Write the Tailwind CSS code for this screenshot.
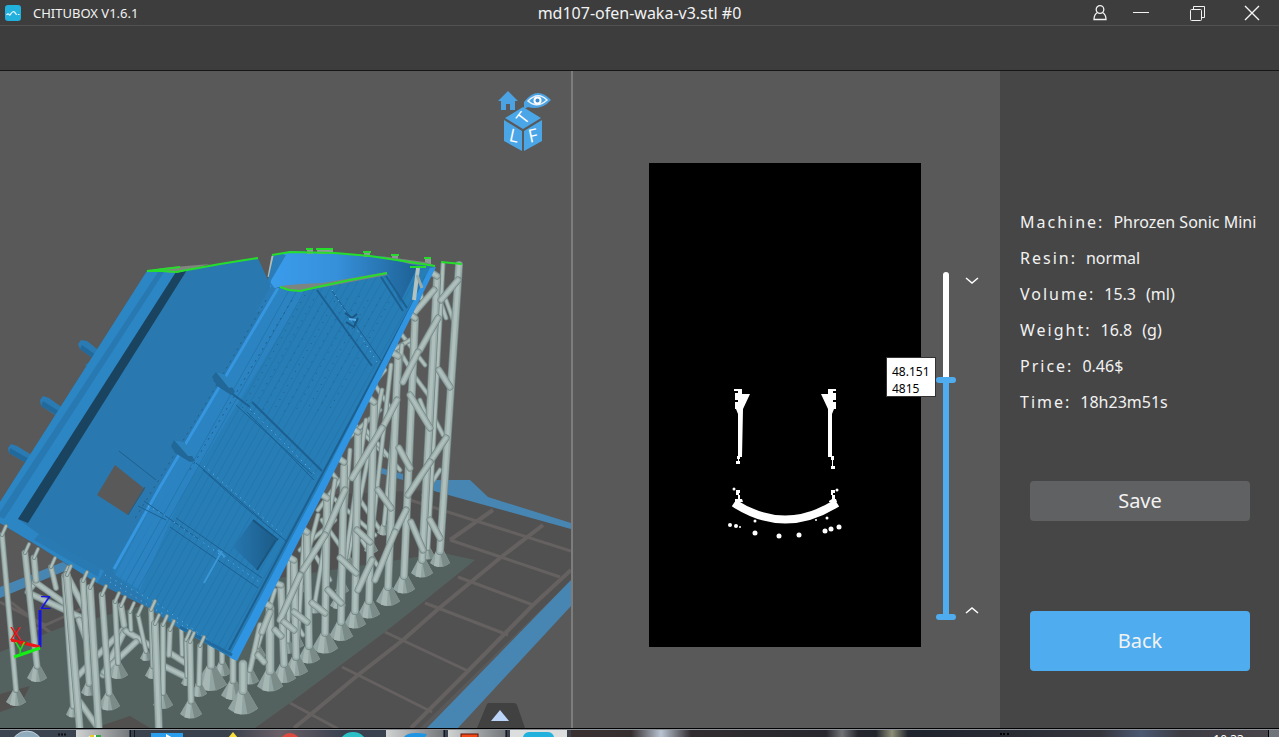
<!DOCTYPE html>
<html lang="en">
<head>
    <meta charset="UTF-8">
    <meta name="viewport" content="width=device-width, initial-scale=1.0">
    <title>CHITUBOX V1.6.1</title>
    <script src="https://cdn.jsdelivr.net/npm/@tailwindcss/browser@4"></script>
</head>
<body class="bg-[#595959] text-[#f2f2f2] font-['Noto_Sans','Open_Sans',sans-serif]">
<div class="flex flex-col h-screen overflow-hidden">

    <!-- Title bar -->
    <header class="grid grid-cols-3 items-center h-[26px] shrink-0 bg-[#3d3d3d] border-b border-[#525252]">
        <div class="flex items-center gap-3 pl-[5px]">
            <svg class="size-4" viewBox="0 0 16 16" fill="none">
                <rect width="16" height="16" rx="3" fill="#22b1dc"/>
                <path d="M1.500 10 Q3 8 4 9.500 Q5 11 6 8.500 Q8 5.500 10 7.500 Q11 10 12 9 M13 9.500h1.500" stroke="#e8f8ff" stroke-width="1.200"/>
            </svg>
            <span class="text-[13px] leading-5">CHITUBOX V1.6.1</span>
        </div>
        <h1 class="text-center text-base leading-6 whitespace-nowrap">md107-ofen-waka-v3.stl #0</h1>
        <div class="flex justify-end items-center">
            <button aria-label="Account" class="flex justify-center w-[26px]">
                <svg class="w-4 h-[18px]" viewBox="0 0 16 18" fill="none" stroke="#f2f2f2" stroke-width="1.300">
                    <circle cx="8" cy="5.500" r="3.800"/>
                    <path d="M5.500 8.500 Q2 10.500 2 15.500 H14 Q14 10.500 10.500 8.500"/>
                </svg>
            </button>
            <button aria-label="Minimize" class="flex justify-center w-14">
                <svg class="size-4" viewBox="0 0 16 16" stroke="#f2f2f2"><path d="M0 7.500H16"/></svg>
            </button>
            <button aria-label="Restore" class="flex justify-center w-14">
                <svg class="size-4" viewBox="0 0 16 16" fill="none" stroke="#f2f2f2">
                    <rect x="1.500" y="4.500" width="11" height="11" rx="1"/>
                    <path d="M4.500 4.500V1.500H15.500V12.500H12.500"/>
                </svg>
            </button>
            <button aria-label="Close" class="flex justify-center w-[54px]">
                <svg class="size-4" viewBox="0 0 16 16" stroke="#f5f5f5" stroke-width="1.400"><path d="M1 1L15 15M15 1L1 15"/></svg>
            </button>
        </div>
    </header>

    <!-- Toolbar -->
    <div class="h-[45px] shrink-0 bg-[#3d3d3d] border-b border-[#161616]"></div>

    <main class="flex flex-1 min-h-0">
        <!-- 3D view -->
        <section class="relative flex-1 min-w-0 border-r-2 border-[#7d7d7d]">
            <svg id="scene" class="block size-full" viewBox="0 71 571 657" preserveAspectRatio="xMinYMax slice" fill="none">
                <defs>
                    <linearGradient id="inner" x1="0" y1="0" x2="1" y2="0">
                        <stop offset="0" stop-color="#3a9cec"/><stop offset=".45" stop-color="#3690da"/><stop offset="1" stop-color="#1d6194"/>
                    </linearGradient>
                    <linearGradient id="door" x1="0" y1="0" x2="1" y2="0">
                        <stop offset="0" stop-color="#2677b0"/><stop offset="1" stop-color="#1c5b88"/>
                    </linearGradient>
                    <clipPath id="wallClip"><path d="M284 290L300 291L386 275L428 276L228 655L120 578Z"/></clipPath>
                </defs>

                <!-- build plate -->
                <path d="M435 490L571 529V580L420 728H0V594L66 568L200 500Z" fill="#525151"/>
                <g stroke="#656160" stroke-width="3">
                    <path d="M543 525L500 558L437 610L403 640L358 675L310 715L294 728" stroke-width="4"/>
                    <path d="M493 510L450 540M571 570L533 605L467 672L411 728" stroke-width="4"/>
                    <path d="M410 500L571 551M450 540L560 577M458 577L533 605M425 603L508 635M385 632L468 671M342 667L432 712M290 703L340 730"/>
                    <path d="M0 602L45 625M30 632L90 605M8 600L60 640"/>
                </g>
                <path d="M443 553L475 560L423 602L385 632L290 703L255 728H0V652L60 628L200 590Z" fill="#54625f"/>
                <path d="M0 694L30 686L20 705L0 712ZM95 728L130 716L150 728Z" fill="#524f4f"/>
                <path d="M432 480H470L488 497L571 523V529L434 491ZM571 580V606L458 728H427ZM0 587L63 562L72 568L0 598ZM378 467L403 474V480L376 472Z" fill="#4786b3"/>

                <g id="backSupports"></g>
                <g id="rightSupports"></g>

                <!-- pegs on the left wall -->
                <g fill="#2a7bb3">
                    <path d="M78 344L81 340L87 341L101 352L97 361L80 349ZM40 400L43 396L49 398L67 411L60 418L41 406ZM8 448L11 444L17 446L35 457L30 465L9 453ZM85 365L93 360L90 368Z"/>
                </g>
                <g fill="#236a9c">
                    <path d="M80 349L97 361L99 357L82 345ZM41 406L60 417L62 413L43 401ZM9 453L30 465L31 460L10 448Z"/>
                </g>

                <!-- model body -->
                <path d="M147 271L175 272L258 258L268 279L274 255L290 251L380 256L435 267L235 660L180 629L147 607L97 583L40 547L0 523V502Z" fill="#2979b0"/>
                <path d="M258 258L268 280L275 260L272 254Z" fill="#595959"/>
                <path d="M273 256L269 277" stroke="#b3bcb9" stroke-width="3"/>
                <path d="M147 271L176 272L18 519L40 535L104 571L97 583L40 547L0 523V502Z" fill="#2c86c4"/>
                <path d="M158 272L164 272L4 519L0 517V512Z" fill="#2879b1"/>
                <path d="M176 272L187 270L28 523L18 519Z" fill="#19435f"/>
                <path d="M40 533L100 569L98 577L34 540Z" fill="#297ab3"/>
                <path d="M115 465L145 489L128 515L97 495Z" fill="#595959"/>
                <path d="M119 451L156 480M145 487L128 515" stroke="#1d5f8d"/>
                <!-- right wall -->
                <path d="M277 288L290 290L330 284L386 274L432 268L234 659L180 629L115 575L112 568L160 487Z" fill="#277db6"/>
                <path d="M279 288L306 291L182 495L140 590L115 575L162 487Z" fill="#2b84c1"/>
                <g id="planks" clip-path="url(#wallClip)" stroke="#2576ac"></g>
                <path d="M284 254L290 251L380 257L418 266L400 303L388 274L330 284L300 288L278 287L270 290L271 276Z" fill="url(#inner)"/>
                <path d="M274 254L286 255L270 282L276 290L262 310L256 312L271 286L268 280Z" fill="#2a7db8"/>
                <path d="M278 288L160 487L114 569" stroke="#3796e0" stroke-width="3"/>
                <path d="M280 286L300 284L322 283L387 272V275L325 287L299 291L285 290Z" fill="#7c8580"/>
                <path d="M147 271L163 268L210 264L177 273Z" fill="#80877f"/>

                <!-- straps and seams -->
                <g stroke="#1c6091" stroke-width="2">
                    <path d="M317 290L372 366M252 402L322 471M381 277L403 311M386 276L407 308M214 380L250 407M424 282L229 650"/>
                    <path d="M247 412L314 480M203 470L240 503L286 541M170 527L258 588M176 518L262 578M138 506L166 520M144 501L200 540" stroke-width="1"/>
                    <path d="M332 291L382 362M196 463L262 520M236 405L312 474" stroke-width="1"/>
                </g>
                <g stroke="#6db7ea" stroke-width="1" stroke-dasharray="1 5">
                    <path d="M332 290L352 322L377 362M250 409L318 477M204 466L284 536M174 522L262 584M148 506L168 517"/>
                    <path d="M105 575L155 602L215 645M110 582L226 652"/>
                </g>
                <path d="M266 300L205 405L134 520M292 300L190 470" stroke="#1d5f8f" stroke-dasharray="2 5"/>
                <g id="rivets" clip-path="url(#wallClip)" stroke="#1d5f8f"></g>
                <path d="M253 520L276 540L257 570L233 547Z" fill="url(#door)"/>
                <path d="M276 540L257 570M253 520L278 540" stroke="#1a557f" stroke-width="2"/>
                <path d="M222 551L213 567L204 583M218 550L225 557" stroke="#3b96d6" stroke-width="2"/>
                <path d="M345 313L352 318L357 314M346 322L354 327L358 318" stroke="#1a5682" stroke-width="2"/>
                <path d="M349 319L356 320" stroke="#58aeea" stroke-width="2"/>
                <path d="M212 377L216 372L224 374L235 392L231 395L217 386ZM171 446L174 440L184 442L195 461L190 462L175 453Z" fill="#216797"/>
                <path d="M216 372L224 374L234 387L229 388ZM174 440L184 442L193 456L188 456Z" fill="#2d83bd"/>
                <path d="M430 268L436 267L325 490L237 661L229 657L318 488Z" fill="#2f94e2"/>
                <path d="M180 627L232 655" stroke="#206a9f" stroke-width="3"/>

                <!-- supports in front of the top right corner -->
                <path d="M418 268L414 300" stroke="#b3c3c0" stroke-width="4"/>
                <path d="M417 275L422 288" stroke="#98aaa7" stroke-width="3"/>

                <!-- cut contour -->
                <path d="M307 250H313V254H307ZM317 250H333V254H317ZM364 253H370V257H364ZM392 256H398V260H392ZM425 259H431V265H425Z" fill="#8d9b98"/>
                <path d="M380 256L425 262L436 266L410 264Z" fill="#7c8580"/>
                <g stroke="#27dd2c" stroke-width="2">
                    <path d="M147 271L163 271L176 272L187 270L220 264L258 258M147 271L180 267"/>
                    <path d="M272 255L290 252L335 253L370 256L410 262L435 266M410 267L426 267"/>
                    <path d="M280 287L289 290L300 291L322 286L350 280L387 273M441 262L462 264"/>
                    <path d="M306 249H313M316 249H333M363 252H371M391 255H399M424 258H431"/>
                </g>

                <g id="leftSupports"></g>

                <!-- axes -->
                <path d="M40 647V610" stroke="#1414e6" stroke-width="3"/>
                <path d="M40 647L11 640M24 641L22 646" stroke="#f01414" stroke-width="3"/>
                <path d="M40 648L14 657" stroke="#14f014" stroke-width="3"/>
                <g font-family="Open Sans" font-size="19">
                    <text x="40" y="609" fill="#1414e6">Z</text>
                    <text x="10" y="640" fill="#f01414">X</text>
                    <text x="15" y="655" fill="#14e014">Y</text>
                </g>
            </svg>

            <!-- view controls -->
            <div class="absolute top-5 right-5 w-[54px]">
                <div class="flex justify-between">
                    <button aria-label="Home view"><svg class="w-[22px] h-5" viewBox="0 0 22 20"><path d="M11 0L21 10H18V19H13V13H9V19H4V10H1Z" fill="#4ba3e3"/></svg></button>
                    <button aria-label="Perspective"><svg class="w-[28px] h-5" viewBox="0 0 28 20">
                        <path d="M1 11Q14-6 28 9Q18 20 5 16L1 18Z" fill="#4ba3e3"/>
                        <path d="M5 10Q15 0 24 9Q14 18 5 10Z" fill="none" stroke="#e4f2fc" stroke-width="1.500"/>
                        <circle cx="14.500" cy="9.500" r="4" fill="#fff"/><circle cx="14.500" cy="9.500" r="2" fill="#3c8bc9"/>
                    </svg></button>
                </div>
                <button aria-label="View cube" class="block mx-auto -mt-1">
                    <svg class="w-10 h-[46px]" viewBox="504 107 40 46">
                        <g fill="#4ba6e8">
                            <path d="M523 107L541 118L523 129L505 118Z"/>
                            <path d="M504 120L522 131V151L504 141Z"/>
                            <path d="M524 131L542 120V141L524 151Z"/>
                        </g>
                        <g fill="#fff" font-family="Open Sans" text-anchor="middle">
                            <text x="523" y="124" font-size="17" transform="rotate(-52 523 118)">T</text>
                            <text x="514" y="142" font-size="18" transform="rotate(12 513 136)">L</text>
                            <text x="533" y="142" font-size="18" transform="rotate(-12 533 136)">F</text>
                        </g>
                    </svg>
                </button>
            </div>
            <button aria-label="Expand" class="absolute bottom-0 right-[46px]">
                <svg class="block w-12 h-[26px]" viewBox="0 0 48 26">
                    <path d="M0 26L10 2Q11 1 12 1H37Q39 1 40 3L48 26Z" fill="#414141"/>
                    <path d="M14 19L23 8L32 19Z" fill="#bcd4f8"/>
                </svg>
            </button>
        </section>

        <!-- slice preview -->
        <section class="flex items-start shrink-0 w-[427px] pl-[76px] pt-[92px] gap-[15px]">
            <svg class="w-[272px] h-[484px] bg-black" viewBox="649 163 272 484" fill="#fff">
                <path d="M734 389H742V394H750L743 409L742 457H738V414L736 409H735V402H738V400H735V393H738V391H734Z"/>
                <path d="M828 389H836V391H833V393H836V400H833V402H836V409H834L832 414V457H828V409L821 394H828Z"/>
                <path d="M737 456H740V459H739V461H740V464H736V461H738V459H737ZM831 456H834V460H833V466H835V469H831V466H832V460H831ZM736 490H740V493H739V495H740V499H742L743 502H735V499H738V495H736ZM831 490H835V493H833V495H835V499H836L837 502H829V501L832 499V495H831Z"/>
                <path d="M734 503Q785 536 837 503" fill="none" stroke="#fff" stroke-width="8"/>
                <g id="dots"></g>
            </svg>

            <div class="relative flex flex-col items-center w-5 h-[348px] mt-[109px]">
                <div class="w-[6px] h-[108px] shrink-0 rounded-t-full bg-white"></div>
                <div class="w-[6px] flex-1 bg-[#4fadef]"></div>
                <div class="absolute top-[105px] w-5 h-[6px] rounded-full bg-[#4fadef]"></div>
                <div class="absolute bottom-0 w-5 h-[6px] rounded-full bg-[#4fadef]"></div>
                <output for="layer" class="absolute right-full top-[85px] w-[50px] h-10 pl-[5px] pt-[5px] border border-[#333] bg-white text-black text-xs leading-[17px]">48.151<br>4815</output>
                <input id="layer" type="range" aria-label="Layer" min="0" max="7000" value="4815" class="absolute inset-0 w-5 h-full opacity-0 [writing-mode:vertical-lr] [direction:rtl]">
            </div>
            <div class="flex flex-col justify-between h-[346px] mt-[109px] -ml-[6px]">
                <button aria-label="Layer up"><svg class="w-[14px] h-4" viewBox="0 0 14 16" fill="none" stroke="#fff" stroke-width="1.500"><path d="M1 6L7 11L13 6"/></svg></button>
                <button aria-label="Layer down"><svg class="w-[14px] h-4" viewBox="0 0 14 16" fill="none" stroke="#fff" stroke-width="1.500"><path d="M1 11L7 6L13 11"/></svg></button>
            </div>
        </section>

        <!-- print info -->
        <aside class="shrink-0 w-[279px] pt-[133px] bg-[#464646]">
            <dl class="pl-5 text-base leading-9 whitespace-nowrap">
                <div class="flex gap-[9px]"><dt class="tracking-[2px]">Machine:</dt><dd>Phrozen Sonic Mini</dd></div>
                <div class="flex gap-[9px]"><dt class="tracking-[2px]">Resin:</dt><dd>normal</dd></div>
                <div class="flex gap-[9px]"><dt class="tracking-[2px]">Volume:</dt><dd class="flex gap-[10px]">15.3 <span>(ml)</span></dd></div>
                <div class="flex gap-[9px]"><dt class="tracking-[2px]">Weight:</dt><dd class="flex gap-[10px]">16.8 <span>(g)</span></dd></div>
                <div class="flex gap-[9px]"><dt class="tracking-[2px]">Price:</dt><dd>0.46$</dd></div>
                <div class="flex gap-[9px]"><dt class="tracking-[2px]">Time:</dt><dd>18h23m51s</dd></div>
            </dl>
            <div class="flex flex-col gap-[90px] pl-[30px] pr-[29px] pt-[61px] text-xl">
                <button class="h-10 rounded bg-[#606163]">Save</button>
                <button class="h-[60px] rounded bg-[#4fadef]">Back</button>
            </div>
        </aside>
    </main>

    <!-- system task bar -->
    <footer class="flex h-[9px] shrink-0 overflow-hidden border-t border-black bg-[#2b303a]">
        <svg class="w-[571px] h-2 shrink-0" viewBox="0 0 571 8">
            <defs>
                <linearGradient id="bar"><stop offset="0" stop-color="#3b4450"/><stop offset=".4" stop-color="#38404c"/><stop offset=".49" stop-color="#6b5f66"/><stop offset=".6" stop-color="#394150"/><stop offset="1" stop-color="#3c414b"/></linearGradient>
                <linearGradient id="tab"><stop offset="0" stop-color="#d0d2d2"/><stop offset="1" stop-color="#76797c"/></linearGradient>
            </defs>
            <rect width="571" height="8" fill="url(#bar)"/>
            <path d="M0 .5H571" stroke="#8d939b"/>
            <circle cx="27" cy="18" r="16" fill="#8fa9bd" stroke="#c4d2dc"/>
            <path d="M58 5.500H67" stroke="#0c0f14" stroke-width="2" stroke-dasharray="2 1"/>
            <path d="M76 1H129V8H76Z" fill="url(#tab)"/>
            <path d="M386 1H443V8H386Z" fill="url(#tab)"/>
            <path d="M448 1H505V8H448Z" fill="url(#tab)"/>
            <path d="M510 1H567V8H510Z" fill="#dcdede"/>
            <path d="M130.500 1V8M134.500 1V8M444.500 1V8M506.500 1V8" stroke="#14181d"/>
            <path d="M88 8L92 6H101V8Z" fill="#f7f7ef"/><path d="M90 7H94" stroke="#e5cb28" stroke-width="2"/><path d="M96 7H101" stroke="#36a746" stroke-width="2"/>
            <rect x="151" y="4" width="32" height="6" fill="#2b9ded"/><path d="M166 5L173 9H166Z" fill="#fff"/>
            <path d="M228 9L233 3L238 9Z" fill="#f7dd3a"/>
            <circle cx="290" cy="14" r="10" fill="#dc4a40"/>
            <circle cx="353" cy="18" r="15" fill="#2ac0c6"/>
            <path d="M404 8Q408 2 427 5L425 8Z" fill="#1f94e2"/>
            <rect x="461" y="5" width="17" height="6" fill="#f04816" stroke="#5c120a"/>
            <rect x="523" y="3" width="31" height="12" rx="6" fill="#22b1dc"/>
        </svg>
        <div class="relative flex flex-1 justify-end border-t border-[#8d939b] bg-linear-to-r from-[#3a3030] via-[#20242c] to-[#4a464c]">
            <div class="absolute left-[60px] top-0 w-[60px] h-2 bg-linear-to-r from-transparent via-[#b9c4d2] to-transparent"></div>
            <div class="absolute left-[255px] top-0 w-8 h-2 bg-linear-to-r from-transparent via-[#707276] to-transparent"></div>
            <div class="absolute left-[305px] top-0 w-8 h-2 bg-linear-to-r from-transparent via-[#8e8e78] to-transparent"></div>
            <div class="absolute left-[530px] top-0 w-20 h-2 bg-linear-to-r from-transparent via-[#4b5873] to-transparent"></div>
            <div class="absolute right-[270px] top-[3px] w-[9px] border-t-2 border-dotted border-black"></div>
            <time class="mr-6 pt-[2px] text-xs leading-4 text-white">10:33</time>
            <button aria-label="Show desktop" class="w-[11px] border-l border-black bg-[#70757c]"></button>
        </div>
    </footer>
</div>

<script>
    const NS = 'http://www.w3.org/2000/svg';

    function add(parent, tag, attrs) {
        const el = document.createElementNS(NS, tag);
        for (const key in attrs) el.setAttribute(key, attrs[key]);
        document.getElementById(parent).appendChild(el);
    }

    // a shaded rod: dark outline, body, highlight
    function rod(parent, x1, y1, x2, y2, w) {
        const d = `M${x1} ${y1}L${x2} ${y2}`;
        add(parent, 'path', { d, stroke: '#738684', 'stroke-width': w, 'stroke-linecap': 'round' });
        add(parent, 'path', { d, stroke: '#9caeab', 'stroke-width': w - 1.5, 'stroke-linecap': 'round' });
        add(parent, 'path', { d, stroke: '#afbfbc', 'stroke-width': w / 2.5, 'stroke-linecap': 'round' });
    }

    // a column standing on a cone foot of half-width r
    function column(parent, x1, y1, x2, y2, w, r) {
        if (r) {
            const t = y2 - r * 1.1, b = y2 + r * 0.1;
            add(parent, 'path', { d: `M${x2 - w / 2} ${t}L${x2 - r} ${b}Q${x2} ${b + r * 0.8} ${x2 + r} ${b}L${x2 + w / 2} ${t}Z`, fill: '#93a5a2' });
            add(parent, 'path', { d: `M${x2} ${t}L${x2 + r * 0.3} ${b + r * 0.4}L${x2 + r} ${b}L${x2 + w / 2} ${t}Z`, fill: '#7b8c88' });
            add(parent, 'path', { d: `M${x2 - w / 2} ${t}L${x2 - r * 0.6} ${b + r * 0.3}L${x2 - r * 0.1} ${b + r * 0.4}L${x2} ${t}Z`, fill: '#a6b7b4' });
            y2 = t;
        }
        rod(parent, x1, y1, x2, y2, w);
    }

    const back = [
        [443, 264, 428, 556, 5, 7], [402, 345, 384, 532, 5, 7],
        [391, 365, 371, 550, 5, 7], [382, 390, 348, 565, 5, 7], [366, 420, 342, 590, 5, 7],
        [350, 450, 338, 605, 5, 8], [335, 480, 315, 610, 5, 7], [318, 515, 300, 590, 5, 6],
        [304, 535, 298, 645, 5, 6], [289, 560, 288, 650, 5, 8], [275, 590, 258, 655, 5, 8],
        [260, 625, 250, 680, 6, 9], [222, 645, 222, 672, 6, 9], [233, 655, 233, 694, 7, 12],
        [211, 645, 211, 683, 8, 16], [181, 620, 182, 655, 5, 0]
    ];
    const backBraces = [
        [415, 265, 422, 300], [446, 300, 455, 325], [440, 300, 446, 318], [402, 335, 425, 365],
        [396, 345, 412, 372], [385, 355, 410, 340], [410, 370, 432, 400], [375, 385, 395, 415],
        [360, 400, 385, 370], [350, 420, 385, 455], [340, 445, 380, 410], [330, 470, 345, 490],
        [366, 430, 400, 470], [330, 495, 375, 535], [420, 400, 432, 430], [360, 500, 380, 530],
        [318, 510, 340, 480], [430, 410, 443, 435], [312, 550, 330, 580], [322, 520, 350, 560],
        [288, 610, 303, 635], [362, 540, 377, 565], [424, 495, 440, 470], [300, 550, 335, 520]
    ];
    backBraces.forEach(b => rod('backSupports', ...b, 5));
    back.forEach(c => column('backSupports', ...c));

    const front = [
        [459, 265, 440, 562, 8, 10], [437, 278, 422, 572, 8, 11], [415, 320, 404, 588, 8, 11],
        [398, 358, 388, 600, 8, 12], [374, 403, 369, 613, 8, 11], [358, 434, 355, 623, 8, 11],
        [344, 467, 341, 635, 8, 12], [327, 500, 325, 647, 8, 13], [307, 533, 309, 658, 8, 11],
        [294, 562, 296, 670, 8, 12], [281, 587, 284, 677, 8, 12], [270, 608, 270, 685, 9, 13],
        [243, 664, 243, 707, 9, 15]
    ];
    const frontBraces = [
        [458, 280, 441, 300], [434, 290, 415, 312], [438, 318, 420, 350], [418, 352, 403, 382],
        [439, 370, 450, 387], [410, 395, 430, 428], [446, 438, 430, 462], [430, 462, 408, 495],
        [397, 400, 384, 425], [382, 428, 352, 478], [399, 448, 410, 468], [406, 510, 395, 532],
        [395, 532, 375, 580], [411, 522, 423, 550], [430, 520, 440, 538], [378, 490, 391, 508],
        [357, 530, 370, 542], [340, 558, 356, 573], [372, 560, 358, 590], [345, 490, 325, 535],
        [325, 535, 303, 570], [328, 590, 341, 603], [312, 603, 325, 613], [300, 575, 280, 620],
        [294, 612, 307, 622], [284, 622, 294, 630], [270, 612, 262, 632], [275, 630, 281, 636],
        [258, 655, 264, 662], [344, 462, 337, 457], [327, 498, 318, 492], [307, 532, 299, 526],
        [294, 560, 287, 556], [281, 585, 273, 582], [270, 606, 263, 602], [398, 356, 391, 352],
        [415, 318, 409, 313], [437, 276, 431, 272], [374, 402, 367, 396], [358, 432, 350, 427]
    ];
    front.forEach(c => column('rightSupports', ...c));
    frontBraces.forEach(b => rod('rightSupports', ...b, 7));

    const left = [
        [2, 535, 16, 701, 6, 10], [25, 553, 37, 677, 7, 10], [51, 567, 56, 588, 6, 0],
        [34, 558, 36, 580, 7, 0], [64, 576, 73, 714, 6, 7], [83, 581, 89, 692, 7, 8],
        [115, 602, 118, 674, 6, 10], [102, 595, 109, 705, 7, 11], [130, 612, 131, 630, 5, 0],
        [138, 615, 146, 658, 5, 6], [151, 610, 153, 675, 6, 8], [163, 625, 163, 704, 6, 10],
        [170, 630, 169, 655, 6, 0], [186, 640, 187, 683, 5, 6], [200, 646, 199, 693, 6, 8],
        [190, 642, 191, 713, 7, 11], [67, 575, 80, 732, 8, 0], [90, 588, 99, 732, 8, 0],
        [155, 624, 159, 732, 8, 0], [121, 606, 124, 625, 7, 0]
    ];
    const leftBraces = [
        [35, 582, 28, 592], [35, 582, 66, 604], [31, 594, 80, 617], [68, 577, 84, 608],
        [78, 676, 90, 663], [98, 655, 124, 629], [103, 675, 124, 632], [126, 631, 154, 648],
        [104, 672, 136, 642], [80, 702, 96, 725], [160, 664, 190, 679], [170, 653, 187, 664],
        [79, 620, 90, 650]
    ];
    leftBraces.forEach(b => rod('leftSupports', ...b, 7));
    left.forEach(c => {
        column('leftSupports', ...c);
        // contact tip towards the hull
        rod('leftSupports', c[0], c[1], c[0] + 4, c[1] - 9, 4);
    });

    // plank seams run along the wall, rivet rows between them
    for (let i = 0; i < 30; i++) {
        const x = 250 + i * 8;
        add('planks', 'path', { d: `M${x} 260L${x - 235} 680` });
    }
    for (let i = 0; i < 9; i++) {
        const x = 305 + i * 11;
        add('rivets', 'path', { d: `M${x} 295L${x - 65} 412`, 'stroke-dasharray': '1 7', 'stroke-dashoffset': i * 3 });
    }

    // support cross-sections in the slice
    [[730, 525, 2], [736, 526, 2], [740, 527, 1], [755, 533, 2.5], [779, 536, 2.5], [799, 535, 2.5],
     [825, 531, 2.5], [831, 529, 2.5], [839, 527, 2.5], [755, 521, 1.5], [827, 518, 1.5], [816, 520, 1],
     [734, 489, 1.5], [837, 490, 1.5]].forEach(([cx, cy, r]) => add('dots', 'circle', { cx, cy, r }));
</script>
</body>
</html>
